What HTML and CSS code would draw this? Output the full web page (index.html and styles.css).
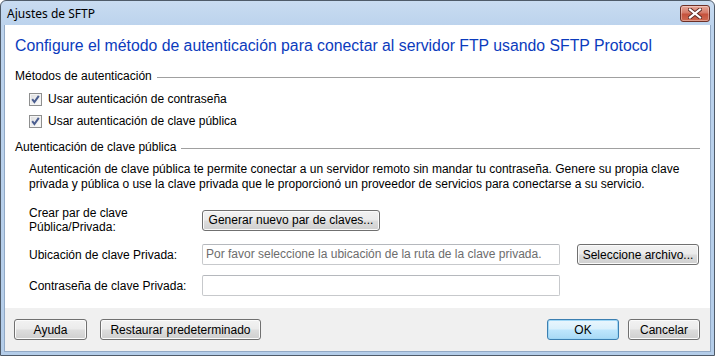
FILE: index.html
```html
<!DOCTYPE html>
<html lang="es">
<head>
<meta charset="utf-8">
<title>Ajustes de SFTP</title>
<link rel="stylesheet" href="styles.css">
</head>
<body>
<div class="window">
  <div class="titlebar">
    <span class="title">Ajustes de SFTP</span>
    <div class="close">
      <svg width="14" height="11" viewBox="0 0 14 11">
        <path d="M2 1.5 L12 9.5 M12 1.5 L2 9.5" stroke="#5a2a24" stroke-width="4" stroke-linecap="square"/>
        <path d="M2 1.5 L12 9.5 M12 1.5 L2 9.5" stroke="#ffffff" stroke-width="2.2" stroke-linecap="square"/>
      </svg>
    </div>
  </div>
  <div class="client">
    <div class="main">
      <h1 class="instruction">Configure el método de autenticación para conectar al servidor FTP usando SFTP Protocol</h1>

      <section class="group">
        <div class="group-head"><span>Métodos de autenticación</span><span class="rule"></span></div>
        <div class="group-body">
          <label class="check">
            <span class="box"><svg width="11" height="11" viewBox="0 0 11 11"><path d="M2.2 5.2 L4.4 8 L8.8 1.8" fill="none" stroke="#4a5d8f" stroke-width="2"/></svg></span>
            Usar autenticación de contraseña
          </label>
          <label class="check">
            <span class="box"><svg width="11" height="11" viewBox="0 0 11 11"><path d="M2.2 5.2 L4.4 8 L8.8 1.8" fill="none" stroke="#4a5d8f" stroke-width="2"/></svg></span>
            Usar autenticación de clave pública
          </label>
        </div>
      </section>

      <section class="group group2">
        <div class="group-head"><span>Autenticación de clave pública</span><span class="rule"></span></div>
        <div class="group-body">
          <p class="desc">Autenticación de clave pública te permite conectar a un servidor remoto sin mandar tu contraseña. Genere su propia clave privada y pública o use la clave privada que le proporcionó un proveedor de servicios para conectarse a su servicio.</p>
          <div class="form">
            <div class="row">
              <span class="label">Crear par de clave<br>Pública/Privada:</span>
              <button class="btn btn-gen">Generar nuevo par de claves...</button>
            </div>
            <div class="row">
              <span class="label">Ubicación de clave Privada:</span>
              <div class="field placeholder">Por favor seleccione la ubicación de la ruta de la clave privada.</div>
              <button class="btn btn-sel">Seleccione archivo...</button>
            </div>
            <div class="row">
              <span class="label">Contraseña de clave Privada:</span>
              <div class="field"></div>
            </div>
          </div>
        </div>
      </section>
    </div>
    <div class="footer">
      <div class="left">
        <button class="btn btn-help">Ayuda</button>
        <button class="btn btn-restore">Restaurar predeterminado</button>
      </div>
      <div class="right">
        <button class="btn btn-ok">OK</button>
        <button class="btn btn-cancel">Cancelar</button>
      </div>
    </div>
  </div>
</div>
</body>
</html>
```

FILE: styles.css
```css
* { box-sizing: border-box; }
html, body { margin: 0; padding: 0; background: #ffffff; }
body {
  font-family: "Liberation Sans", Arial, sans-serif;
  font-size: 12px;
  color: #000;
}
.window {
  width: 715px;
  height: 356px;
  border: 1px solid #4f5b69;
  border-radius: 6px 6px 0 0;
  background: linear-gradient(to bottom, #c9dcf1 0px, #bcd3ed 24px, #b4cde9 100%);
  padding: 0 3px 3px 3px;
  display: flex;
  flex-direction: column;
}
.titlebar {
  height: 24px;
  display: flex;
  align-items: center;
  justify-content: space-between;
  padding-left: 3px;
  padding-right: 1px;
}
.title {
  font-family: "Noto Sans", "Open Sans", sans-serif;
  font-size: 12px;
  color: #000;
  margin-top: 1px;
}
.close {
  width: 30px;
  height: 17px;
  margin-top: 1px;
  border: 1px solid #6d3027;
  border-radius: 3px;
  background: linear-gradient(to bottom, #e8a89a 0%, #d57a68 45%, #c5523d 55%, #cf6a52 100%);
  box-shadow: inset 0 0 0 1px rgba(255,255,255,0.35);
  display: flex;
  align-items: center;
  justify-content: center;
}
.client {
  flex: 1;
  background: #ffffff;
  border: 1px solid #92a9c5;
  border-top: none;
  display: flex;
  flex-direction: column;
}
.main {
  flex: 1;
  padding: 12px 10px 0 10px;
}
.instruction {
  margin: 0;
  font-family: "Liberation Sans", Arial, sans-serif;
  font-weight: normal;
  font-size: 15.8px;
  line-height: 18px;
  color: #0b3bbd;
}
.group { margin-top: 14px; }
.group2 { margin-top: 8px; }
.group-head {
  display: flex;
  align-items: center;
  height: 15px;
  line-height: 15px;
}
.rule {
  flex: 1;
  height: 1px;
  background: #a0a0a0;
  margin-left: 5px;
  margin-top: 1px;
}
.group-body { padding-left: 14px; }
.check {
  display: flex;
  align-items: center;
  height: 22px;
}
.check:first-child { margin-top: 4px; }
.box {
  width: 13px;
  height: 13px;
  border: 1px solid #8e8f8f;
  background: linear-gradient(135deg, #dcdcdc 0%, #f4f4f4 70%, #ffffff 100%);
  box-shadow: inset 0 0 0 1px #f4f4f4;
  display: flex;
  align-items: center;
  justify-content: center;
  margin-right: 6px;
}
.desc {
  margin: 7px 0 0 0;
  line-height: 15px;
}
.form {
  margin-top: 14px;
  display: flex;
  flex-direction: column;
  gap: 10px;
}
.row {
  display: flex;
  align-items: center;
  min-height: 21px;
}
.label {
  width: 173px;
  line-height: 14px;
}
.btn {
  font-family: "Liberation Sans", Arial, sans-serif;
  font-size: 12px;
  color: #000;
  height: 21px;
  padding: 0;
  border: 1px solid #707070;
  border-radius: 3px;
  background: linear-gradient(to bottom, #f2f2f2 0%, #ebebeb 48%, #dddddd 52%, #cfcfcf 100%);
  box-shadow: inset 0 0 0 1px #fbfbfb;
}
.btn-gen { width: 178px; }
.btn-sel { width: 122px; margin-left: 17px; }
.field {
  width: 358px;
  height: 21px;
  border: 1px solid #c7c9cc;
  border-top-color: #b5b8bd;
  border-radius: 2px;
  background: #fff;
  line-height: 19px;
  padding-left: 3px;
  white-space: nowrap;
  overflow: hidden;
}
.placeholder { color: #6d6d6d; }
.footer {
  height: 43px;
  background: #f0f0f0;
  display: flex;
  justify-content: space-between;
  align-items: flex-start;
  padding: 11px 10px 0 9px;
}
.left, .right { display: flex; }
.left { gap: 13px; }
.right { gap: 9px; }
.btn-help { width: 73px; }
.btn-restore { width: 161px; }
.btn-ok {
  width: 72px;
  border-color: #3c7fb1;
  box-shadow: inset 0 0 0 1px #9fd7f6;
  background: linear-gradient(to bottom, #eaf6fd 0%, #d9f0fc 48%, #bee6fd 52%, #a7d9f5 100%);
}
.btn-cancel { width: 72px; }
```
